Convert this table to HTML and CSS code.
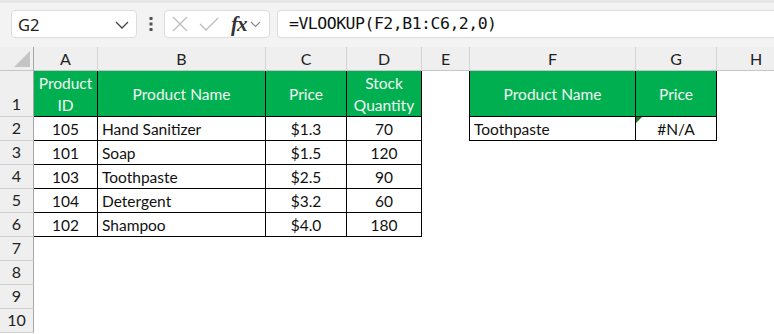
FILE: index.html
```html
<html>
	<head>
		<link rel="stylesheet" href="styles.css">
	</head>
	<body>
		<div class="toolbar">
			<div class="namebox">
				<span>G2</span>
				<svg class="chev" width="14" height="8" viewBox="0 0 14 8"><path d="M1 1 L7 7 L13 1" fill="none" stroke="#444" stroke-width="1.3"/></svg>
			</div>
			<div class="dots">
				<svg width="4" height="14" viewBox="0 0 4 14"><rect x="0.5" y="0" width="3" height="3" fill="#555"/><rect x="0.5" y="5.5" width="3" height="3" fill="#555"/><rect x="0.5" y="11" width="3" height="3" fill="#555"/></svg>
			</div>
			<div class="fxbox">
				<svg width="16" height="16" viewBox="0 0 16 16"><path d="M1 1 L15 15 M15 1 L1 15" stroke="#bdbdbd" stroke-width="1.3"/></svg>
				<svg class="ok" width="20" height="16" viewBox="0 0 20 16"><path d="M1 8 L7 14 L19 2" fill="none" stroke="#bdbdbd" stroke-width="1.3"/></svg>
				<span class="fx">fx</span>
				<svg width="11" height="7" viewBox="0 0 11 7"><path d="M1 1 L5.5 5.5 L10 1" fill="none" stroke="#888" stroke-width="1.1"/></svg>
			</div>
			<div class="formula">=VLOOKUP(F2,B1:C6,2,0)</div>
		</div>

		<div class="sheet">
			<!-- column headers -->
			<div class="corner"><svg width="16" height="16" viewBox="0 0 16 16"><polygon points="16,0 16,16 0,16" fill="#c4c4c4"/></svg></div>
			<div class="ch">A</div><div class="ch">B</div><div class="ch">C</div><div class="ch">D</div><div class="ch">E</div><div class="ch">F</div><div class="ch">G</div><div class="ch last">H</div>

			<!-- row 1 -->
			<div class="rh">1</div>
			<div class="hd">Product<br>ID</div><div class="hd">Product Name</div><div class="hd">Price</div><div class="hd">Stock<br>Quantity</div>
			<div class="c edge"></div>
			<div class="hd">Product Name</div><div class="hd">Price</div>
			<div class="c"></div>

			<!-- row 2 -->
			<div class="rh">2</div>
			<div class="t num">105</div><div class="t">Hand Sanitizer</div><div class="t num">$1.3</div><div class="t num">70</div>
			<div class="c edge"></div>
			<div class="t">Toothpaste</div><div class="t num err">#N/A</div>
			<div class="c"></div>

			<!-- row 3 -->
			<div class="rh">3</div>
			<div class="t num">101</div><div class="t">Soap</div><div class="t num">$1.5</div><div class="t num">120</div>
			<div class="c"></div><div class="c"></div><div class="c"></div><div class="c"></div>

			<!-- row 4 -->
			<div class="rh">4</div>
			<div class="t num">103</div><div class="t">Toothpaste</div><div class="t num">$2.5</div><div class="t num">90</div>
			<div class="c"></div><div class="c"></div><div class="c"></div><div class="c"></div>

			<!-- row 5 -->
			<div class="rh">5</div>
			<div class="t num">104</div><div class="t">Detergent</div><div class="t num">$3.2</div><div class="t num">60</div>
			<div class="c"></div><div class="c"></div><div class="c"></div><div class="c"></div>

			<!-- row 6 -->
			<div class="rh">6</div>
			<div class="t num">102</div><div class="t">Shampoo</div><div class="t num">$4.0</div><div class="t num">180</div>
			<div class="c"></div><div class="c"></div><div class="c"></div><div class="c"></div>

			<div class="rh">7</div><div class="c"></div><div class="c"></div><div class="c"></div><div class="c"></div><div class="c"></div><div class="c"></div><div class="c"></div><div class="c"></div>
			<div class="rh">8</div><div class="c"></div><div class="c"></div><div class="c"></div><div class="c"></div><div class="c"></div><div class="c"></div><div class="c"></div><div class="c"></div>
			<div class="rh">9</div><div class="c"></div><div class="c"></div><div class="c"></div><div class="c"></div><div class="c"></div><div class="c"></div><div class="c"></div><div class="c"></div>
			<div class="rh">10</div><div class="c"></div><div class="c"></div><div class="c"></div><div class="c"></div><div class="c"></div><div class="c"></div><div class="c"></div><div class="c"></div>
		</div>
	</body>
</html>
```

FILE: styles.css
```css
body{ margin: 0; background: #ffffff; font-family: Lato, "Liberation Sans", sans-serif; font-size: 15.5px; color: #111111; overflow: hidden; }

/* formula bar */
.toolbar{ height: 47px; box-sizing: border-box; background: #f3f3f3; border-top: 3px solid #e6e6e6; padding-top: 7px; display: flex; align-items: flex-start; }
.namebox{ width: 126px; height: 28px; box-sizing: border-box; margin-left: 11px; background: #fff; border: 1px solid #dcdcdc; border-radius: 4px; display: flex; align-items: center; justify-content: space-between; padding: 0 7px 0 6px; font-family: "Noto Sans", sans-serif; font-size: 16.5px; color: #222; }
.chev{ margin-top: 2px; }
.dots{ width: 27px; height: 28px; display: flex; align-items: center; justify-content: center; }
.fxbox{ width: 106px; height: 28px; box-sizing: border-box; background: #fff; border: 1px solid #dcdcdc; border-radius: 4px; display: flex; align-items: center; padding-left: 7px; gap: 0; }
.fxbox .ok{ margin-left: 11px; }
.fx{ font-family: "Liberation Serif", serif; font-style: italic; font-weight: bold; font-size: 21px; color: #333; margin-left: 12px; margin-right: 3px; letter-spacing: -1px; }
.formula{ flex: 1; height: 28px; box-sizing: border-box; margin-left: 7px; background: #fff; border: 1px solid #dcdcdc; border-right: none; border-radius: 4px 0 0 4px; padding-left: 11px; font-family: "DejaVu Sans Mono", monospace; font-size: 16.5px; letter-spacing: -0.5px; line-height: 26px; color: #111; }

/* worksheet grid; column H runs past the window edge */
.sheet{ display: grid; grid-template-columns: 34px 64px 168px 81px 75px 48px 166px 81px 78px; grid-template-rows: 24px 46px repeat(9, 24px); }
.sheet > div{ box-sizing: border-box; display: flex; align-items: center; overflow: hidden; white-space: nowrap; }
.corner{ background: #efefef; border-right: 1px solid #a6a6a6; border-bottom: 1px solid #c6c6c6; justify-content: flex-end; align-items: flex-end !important; padding: 0 3px 3px 0; }
.ch{ background: #efefef; border-right: 1px solid #d4d4d4; border-bottom: 1px solid #c6c6c6; justify-content: center; color: #222; font-size: 16px; }
.ch.last{ border-right: none; }
.rh{ background: #efefef; border-right: 1px solid #a6a6a6; border-bottom: 1px solid #d0d0d0; justify-content: center; align-items: flex-end !important; padding-bottom: 1px; line-height: 22px; color: #222; font-size: 16px; }
.c{ background: #fff; }
.c.edge{ border-right: 1px solid #000; }
.hd{ background: #00b050; color: #f4f4f4; border-right: 1px solid #000; border-bottom: 1px solid #000; justify-content: center; text-align: center; line-height: 22px; white-space: normal !important; }
.t{ border-right: 1px solid #000; border-bottom: 1px solid #000; padding-left: 4px; }
.num{ justify-content: center; padding-left: 0; }
.err{ position: relative; }
.err:before{ content: ""; position: absolute; left: 0; top: 0; border-top: 6px solid #1e7a1e; border-right: 6px solid transparent; }
```
